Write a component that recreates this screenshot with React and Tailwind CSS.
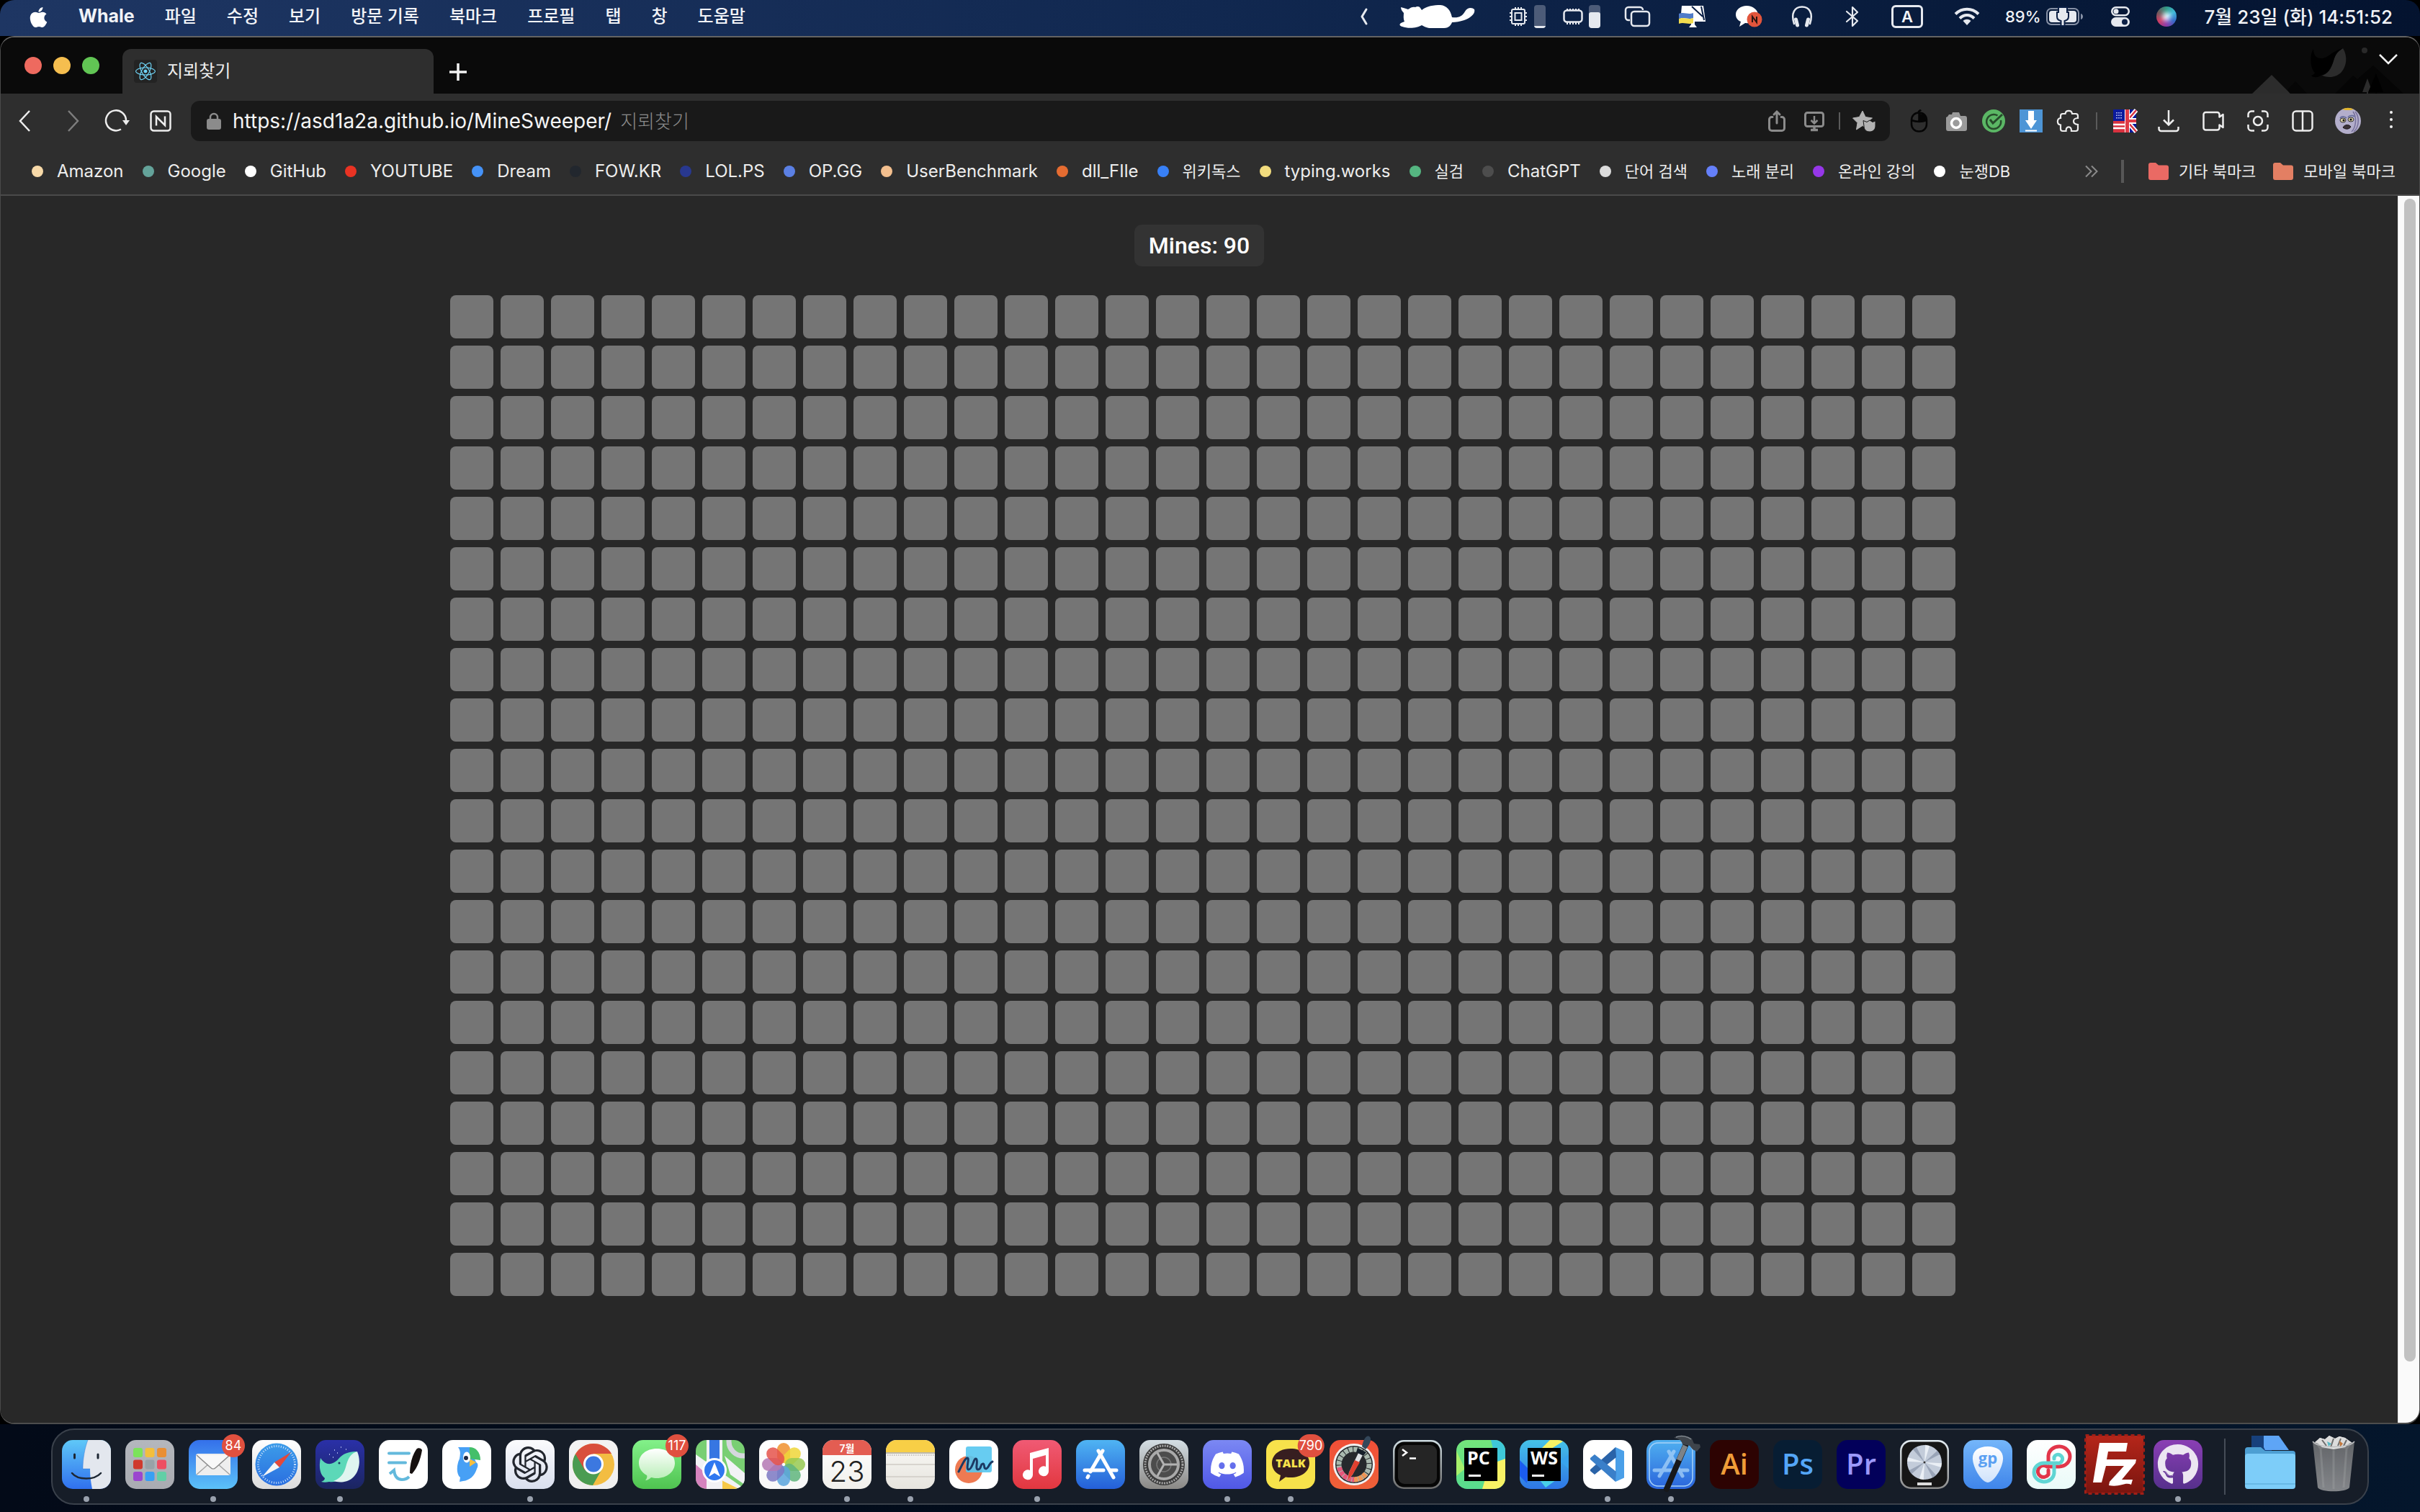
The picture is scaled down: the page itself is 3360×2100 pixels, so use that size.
import React from "react";
import { FaApple, FaReact, FaDiscord, FaGithub } from "react-icons/fa";
import { SiOpenai } from "react-icons/si";

const range = (n) => Array.from({ length: n }, (_, i) => i);

function Svg({ w, h, className = "", children, ...rest }) {
  return (
    <svg
      width={w}
      height={h}
      viewBox={`0 0 ${w} ${h}`}
      fill="none"
      aria-hidden="true"
      className={`shrink-0 overflow-visible ${className}`}
      {...rest}
    >
      {children}
    </svg>
  );
}

/* ---------- macOS menu bar ---------- */

const menus = ["파일", "수정", "보기", "방문 기록", "북마크", "프로필", "탭", "창", "도움말"];

function StatusItems() {
  const c = "#e6e9ef";
  return (
    <div className="flex items-center">
      <Svg w={12} h={24} stroke={c} strokeWidth="3" strokeLinecap="round" strokeLinejoin="round">
        <path d="M9 2 L3 12 L9 22" />
      </Svg>
      <Svg w={105} h={32} className="ml-[43px]" fill="#fff">
        <path d="M2 3 C6 4 9 5 12 6 C16 3 19 2 22 3 C25 1 28 2 29 4 L31 7 C38 1 48 0 57 0 C66 1 71 7 73 17 C82 18 87 16 91 9 C94 3 101 3 104 6 C106 12 98 18 90 21 C84 23 78 24 73 24 C72 27 69 32 62 32 H44 C38 32 35 30 31 28 C25 32 12 33 4 30 C-2 28 0 25 7 23 C5 18 6 14 6 11 C4 9 2 6 2 3 Z" />
      </Svg>
      <Svg w={26} h={28} className="ml-[47px]" stroke={c} strokeWidth="2">
        <rect x="4" y="4" width="18" height="20" rx="2" />
        <rect x="8.500" y="9" width="9" height="10" />
        <path d="M9 1v3M13 1v3M17 1v3M9 24v3M13 24v3M17 24v3M1 9h3M1 14h3M1 19h3M22 9h3M22 14h3M22 19h3" />
      </Svg>
      <span className="ml-[9px] flex h-8 w-4 flex-col justify-end overflow-hidden rounded-[4px] bg-[#4c5b78]">
        <span className="h-[3px] bg-[#e6e9ef]" />
      </span>
      <Svg w={28} h={24} className="ml-6" stroke={c} strokeWidth="2">
        <rect x="1.500" y="3.500" width="25" height="16" rx="4" strokeWidth="2.500" />
        <path d="M6 1v2M10 1v2M14 1v2M18 1v2M22 1v2M6 20v3M10 20v3M14 20v3M18 20v3M22 20v3" />
      </Svg>
      <span className="ml-2 flex h-8 w-4 flex-col justify-end overflow-hidden rounded-[4px] bg-[#4c5b78]">
        <span className="h-[22px] rounded-[3px] bg-[#e6e9ef]" />
      </span>
      <Svg w={36} h={28} className="ml-[34px]" stroke={c} strokeWidth="2.500">
        <path d="M7 19 H5 a4 4 0 0 1 -4 -4 V5 a4 4 0 0 1 4 -4 H21 a4 4 0 0 1 4 4" />
        <rect x="9" y="7" width="25" height="20" rx="4" />
      </Svg>
      <Svg w={38} h={30} className="ml-[39px]">
        <path d="M4 0 H34 L37 22 H22 V26 L25 30 H14 L17 26 V22 H2 Z" fill="#fff" />
        <path d="M18 1 L33 15 M31 1 L35 20" stroke="#0a1f46" strokeWidth="2" />
        <path d="M0 11 C8 8 12 13 20 10 V17 C12 20 8 15 0 18 Z" fill="#4f7bc8" />
        <path d="M0 18 C8 15 12 20 20 17 V24 C12 27 8 22 0 25 Z" fill="#f2dc4e" />
      </Svg>
      <Svg w={38} h={32} className="ml-10">
        <path d="M16 1 C25 1 32 7 32 14 C32 21 24 26 14 25 L6 30 L8 23 C3 21 1 17 1 13 C1 6 8 1 16 1Z" fill="#fff" />
        <circle cx="27" cy="20" r="10.500" fill="#e2553c" />
        <path d="M24 24 V16 L30 24 V16" stroke="#2a1512" strokeWidth="2" />
      </Svg>
      <Svg w={28} h={30} className="ml-[41px]" stroke={c} strokeWidth="2.500" strokeLinecap="round">
        <path d="M3 25 C-2 10 4 1.500 14 1.500 C24 1.500 30 10 25 25" />
        <path d="M5.500 19 L7.500 27 M22.500 19 L20.500 27" strokeWidth="5" />
      </Svg>
      <Svg w={18} h={30} className="ml-[47px]" stroke={c} strokeWidth="2.200" strokeLinejoin="round" strokeLinecap="round">
        <path d="M1 8 L16 21 L9 28 V2 L16 9 L1 22" />
      </Svg>
      <span className="ml-[45px] flex h-8 w-11 items-center justify-center rounded-[6px] border-[3px] border-[#e6e9ef] text-[22px] font-semibold leading-none">
        A
      </span>
      <Svg w={36} h={26} className="ml-[43px]" stroke={c} strokeWidth="4">
        <path d="M2 9.500 C11 0.500 25 0.500 34 9.500" />
        <path d="M8 15.500 C14 9.500 22 9.500 28 15.500" />
        <path d="M12.500 19 C16 16 20 16 23.500 19 L18 25 Z" fill={c} stroke="none" />
      </Svg>
      <span className="ml-[35px] w-12 whitespace-nowrap text-[22px] font-medium">89%</span>
      <Svg w={52} h={26} className="ml-[9px]">
        <rect x="1" y="2" width="44" height="22" rx="6" stroke="#8791a6" strokeWidth="2" />
        <path d="M48 9 c4 1 4 7 0 8z" fill="#8791a6" />
        <rect x="4" y="5" width="38" height="16" rx="4" fill={c} />
        <path d="M17 0 V7 H15 V13 C15 17 18 18.500 20.500 19 V26 H25.500 V19 C28 18.500 31 17 31 13 V7 H29 V0 Z" fill={c} stroke="#0b1f45" strokeWidth="2" />
      </Svg>
      <Svg w={26} h={28} className="ml-[38px]">
        <rect x="1.250" y="1.250" width="23.500" height="11" rx="5.500" stroke={c} strokeWidth="2.500" />
        <circle cx="7" cy="6.800" r="3.500" fill={c} />
        <rect x="0" y="15" width="26" height="13" rx="6.500" fill={c} />
        <circle cx="19" cy="21.500" r="4" fill="#0b1f45" />
      </Svg>
      <span className="ml-[37px] flex size-7 items-center justify-center rounded-full bg-[conic-gradient(#2e9b86,#3fb8d9,#3469c9,#8c3aa8,#cf3c62,#6a5a5a,#2e9b86)]">
        <span className="size-3 rounded-full bg-[#e8f4ff] blur-[3px]" />
      </span>
      <time className="ml-[33px] w-[267px] whitespace-nowrap text-right text-[26px] font-medium">7월 23일 (화) 14:51:52</time>
    </div>
  );
}

function MenuBar() {
  return (
    <header className="flex h-[50px] shrink-0 items-center justify-between rounded-t-[20px] bg-linear-to-r from-[#1e3663] via-[#112850] to-[#04132f] pb-1 pl-10 pr-[38px] font-['Inter','Noto_Sans_CJK_KR',sans-serif] text-[#f1f3f7]">
      <nav className="flex items-center gap-[42px] text-[24px] font-medium">
        <button aria-label="Apple" className="pt-[2px]">
          <FaApple className="h-8 w-[27px] text-white" />
        </button>
        <button className="text-[25px] font-bold">Whale</button>
        {menus.map((m) => (
          <button key={m} className="whitespace-nowrap">{m}</button>
        ))}
      </nav>
      <StatusItems />
    </header>
  );
}

/* ---------- Browser chrome ---------- */

function TabStrip() {
  return (
    <div className="flex h-[78px] shrink-0 items-center bg-[#0a0a0a] pl-[33px]">
      <div className="flex gap-4">
        <button aria-label="닫기" className="size-6 rounded-full bg-[#ee6a5f]" />
        <button aria-label="최소화" className="size-6 rounded-full bg-[#f5be4f]" />
        <button aria-label="전체 화면" className="size-6 rounded-full bg-[#61c554]" />
      </div>
      <button className="ml-8 flex h-[62px] w-[432px] items-center self-end rounded-t-[12px] bg-[#2e2e2e] pl-4 text-[24px] text-[#ededed]">
        <span className="flex size-8 items-center justify-center rounded-[4px] bg-[#232323]">
          <FaReact className="size-7 text-[#6fd3f5]" />
        </span>
        <span className="ml-[14px]">지뢰찾기</span>
      </button>
      <button aria-label="새 탭" className="ml-[22px] pt-[18px]">
        <Svg w={24} h={24} stroke="#f2f2f2" strokeWidth="3.500">
          <path d="M12 0V24M0 12H24" />
        </Svg>
      </button>
      <div className="relative ml-auto h-[78px] w-[259px]">
        <Svg w={259} h={78}>
          <path d="M27 78 L54 52 L80 78 Z" fill="#2c2c2c" />
          <path d="M76 73 L87 61 L103 78 H80 Z" fill="#060606" />
          <path d="M142 78 L167 53 L173 58 L195 39 L237 78 Z" fill="#050505" />
          <path d="M187 57 L191 68 V76 H180 Z" fill="#2c2c2c" />
          <path d="M199 50 L209 76 H188 Z M198 76h2v2h-2z" fill="#000" />
          <path d="M187 76v2" stroke="#2c2c2c" strokeWidth="2" />
          <circle cx="183" cy="18" r="4" fill="#2a2a2a" />
          <path d="M153 15 C160 26 158 40 151 48 C144 56 132 57 122 52 C134 47 138 40 141 29 C144 20 148 18 153 15Z" fill="#2c2c2c" />
          <path d="M112 16 C112 25 116 29 123 29 C133 29 137 19 153 15 C147 19 143 22 140 32 C137 43 132 52 122 53 C118 56 112 56 109 53 C112 52 114 50 114 49 C108 44 106 25 112 16Z" fill="#000" />
        </Svg>
        <button aria-label="탭 목록" className="absolute right-[30px] top-[22px]">
          <Svg w={26} h={16} stroke="#f2f2f2" strokeWidth="2.500">
            <path d="M1 2 L13 14 L25 2" />
          </Svg>
        </button>
      </div>
    </div>
  );
}

function Toolbar() {
  const ic = "#ededed";
  return (
    <div className="flex h-[76px] shrink-0 items-center bg-[#2e2e2e] pl-[25px] pr-9">
      <button aria-label="뒤로">
        <Svg w={16} h={30} stroke={ic} strokeWidth="2.500"><path d="M15 1 L2 15 L15 29" /></Svg>
      </button>
      <button aria-label="앞으로" className="ml-[52px]">
        <Svg w={16} h={30} stroke="#7d7d7d" strokeWidth="2.500"><path d="M1 1 L14 15 L1 29" /></Svg>
      </button>
      <button aria-label="새로고침" className="ml-9">
        <Svg w={34} h={30} stroke={ic} strokeWidth="2.500">
          <path d="M22 26.500 A14 14 0 1 1 29 14" />
          <path d="M24 14 H34 L29 21 Z" fill={ic} stroke="none" />
        </Svg>
      </button>
      <button aria-label="네이버" className="ml-7">
        <Svg w={30} h={30} stroke={ic} strokeWidth="2.500">
          <rect x="1.500" y="1.500" width="27" height="27" rx="4" />
          <path d="M9 21.500 V9 L21 21 V8.500" />
        </Svg>
      </button>
      <div className="ml-[27px] flex h-14 flex-1 items-center rounded-[12px] bg-[#191919] pl-[22px] pr-5">
        <Svg w={20} h={24}>
          <rect x="0" y="9" width="20" height="15" rx="3" fill="#8b8b8b" />
          <path d="M5 10 V7 a5 5 0 0 1 10 0 V10" stroke="#8b8b8b" strokeWidth="2.500" />
        </Svg>
        <input
          aria-label="주소창"
          readOnly
          value="https://asd1a2a.github.io/MineSweeper/"
          className="ml-4 field-sizing-content bg-transparent text-[28px] text-[#f5f5f5] outline-none"
        />
        <span className="ml-3 text-[26px] font-light text-[#8b8b8b]">지뢰찾기</span>
        <div className="ml-auto flex items-center">
          <button aria-label="공유">
            <Svg w={24} h={30} stroke="#8b8b8b" strokeWidth="3" strokeLinecap="round">
              <path d="M6 9.500 H5 a3.500 3.500 0 0 0 -3.500 3.500 V25 a3.500 3.500 0 0 0 3.500 3.500 H19 a3.500 3.500 0 0 0 3.500 -3.500 V13 a3.500 3.500 0 0 0 -3.500 -3.500 H18" />
              <path d="M12 18 V3 M8 6 L12 2 L16 6" />
            </Svg>
          </button>
          <button aria-label="앱 설치" className="ml-[26px]">
            <Svg w={28} h={28} stroke="#8b8b8b" strokeWidth="2.500">
              <rect x="1.500" y="2.500" width="25" height="19" rx="3" strokeWidth="3" />
              <path d="M14 7 V17 M9.500 13 L14 17.500 L18.500 13" />
              <path d="M9 26.500 H19 M14 22 V26" strokeWidth="3.500" />
            </Svg>
          </button>
          <span className="ml-5 h-6 w-[2px] bg-[#5a5a5a]" />
          <button aria-label="즐겨찾기" className="ml-[17px]">
            <Svg w={32} h={30} fill="#b2b2b2">
              <path d="M14 1 L18 9.500 L27.500 11 L21 16 H17 V23 L14 21.500 L5.500 27 L7 17.500 L0.500 11 L9.500 9.500 Z" stroke="#b2b2b2" strokeLinejoin="round" />
              <path d="M15 14.500 L20 16.500 L24 14 L28 16.500 L32 15 V22 C32 27 28 30 24 30 C19 30 16 27 16 22 Z" stroke="#191919" />
            </Svg>
          </button>
        </div>
      </div>
      <div className="ml-6 flex items-center gap-5">
        <button aria-label="마우스 제스처">
          <Svg w={32} h={32} stroke="#050505" strokeWidth="2.500">
            <rect x="6" y="4.500" width="21" height="26" rx="10" />
            <path d="M6 15 C12 17.500 21 17.500 27 15 M16.500 4 V17 M16 5 C15 2 18 2 19 0.500" />
            <path d="M17 6 C23 6 26 9 26 15 C23 16.500 20 17 17 17Z" fill="#050505" stroke="none" />
          </Svg>
        </button>
        <button aria-label="캡처">
          <Svg w={32} h={30}>
            <path d="M4 9 L6 6 H10 L11 3 H20 L22 8 H28 a3 3 0 0 1 3 3 V26 a3 3 0 0 1 -3 3 H5 a3 3 0 0 1 -3 -3 V10Z" fill="#9a9a9a" />
            <circle cx="16" cy="18" r="6.500" stroke="#fff" strokeWidth="3.500" />
          </Svg>
        </button>
        <button aria-label="검사">
          <Svg w={32} h={32}>
            <circle cx="16" cy="16" r="16" fill="#5bb765" />
            <path d="M28 7 L15 19 L11 14" stroke="#274b2b" strokeWidth="3" />
            <path d="M21.500 8.500 A10 10 0 1 0 26 15" stroke="#274b2b" strokeWidth="2.500" />
          </Svg>
        </button>
        <button aria-label="다운로더">
          <Svg w={32} h={32}>
            <rect width="32" height="32" fill="#4d95d6" />
            <path d="M12 2 H20 V15 H24 L16 27 L8 15 H12 Z M8 28.500h16v2H8z" fill="#fff" />
          </Svg>
        </button>
        <button aria-label="확장 앱">
          <Svg w={32} h={30} stroke={ic} strokeWidth="2.200">
            <path d="M8 5 h3.500 C12 -0.500 20.500 -0.500 21 5 H26 a3 3 0 0 1 3 3 V11 C21 11 21 19.500 29 20 V26 a3 3 0 0 1 -3 3 H20 C20 21.500 12.500 21.500 12.500 29 H8 a3 3 0 0 1 -3 -3 V20.500 C-0.500 20 -0.500 11.500 5 11 V8 a3 3 0 0 1 3 -3z" />
          </Svg>
        </button>
      </div>
      <span className="ml-[22px] h-6 w-[2px] bg-[#5a5a5a]" />
      <button aria-label="번역" className="ml-[22px]">
        <Svg w={32} h={32} className="overflow-hidden rounded-[5px]">
          <rect width="32" height="32" fill="#0b1a9c" />
          <rect y="16" width="16" height="16" fill="#d8323f" />
          <path d="M0 21h16M0 26h16" stroke="#fff" strokeWidth="2.500" />
          <path d="M5 4v10M8 4v10M11 4v10" stroke="#dfe3ff" strokeWidth="1.500" strokeDasharray="1.500 2" />
          <path d="M19 16 L32 1 M19 16 L32 31" stroke="#fff" strokeWidth="6" />
          <path d="M19 16 L32 1 M19 16 L32 31" stroke="#d8323f" strokeWidth="2.500" />
          <path d="M16 0h7v12h9v8h-9v12h-7z" fill="#fff" />
          <path d="M17 0h5v14h10v4h-10v14h-5z" fill="#e03a46" />
        </Svg>
      </button>
      <div className="ml-[30px] flex items-center gap-8">
        <button aria-label="다운로드">
          <Svg w={30} h={30} stroke={ic} strokeWidth="2.500">
            <path d="M15 0V20M8 13.500L15 20.500L22 13.500M1.500 23V26a3 3 0 0 0 3 3H25.500a3 3 0 0 0 3-3V23" />
          </Svg>
        </button>
        <button aria-label="녹화">
          <Svg w={30} h={30} stroke={ic} strokeWidth="2.500" strokeLinejoin="round">
            <path d="M4.500 3H20.500a3 3 0 0 1 3 3V9.500L28.500 6V24L23.500 20.500V24.500a3 3 0 0 1-3 3H4.500a3 3 0 0 1-3-3V6a3 3 0 0 1 3-3z" />
          </Svg>
        </button>
        <button aria-label="화면 캡처">
          <Svg w={30} h={30} stroke={ic} strokeWidth="2.500">
            <path d="M10 1.500H6A4.500 4.500 0 0 0 1.500 6V10M20 1.500H24A4.500 4.500 0 0 1 28.500 6V10M10 28.500H6A4.500 4.500 0 0 1 1.500 24V20M20 28.500H24A4.500 4.500 0 0 0 28.500 24V20" />
            <circle cx="15" cy="15" r="6" />
          </Svg>
        </button>
        <button aria-label="사이드바">
          <Svg w={30} h={30} stroke={ic} strokeWidth="2.500">
            <rect x="1.500" y="1.500" width="27" height="27" rx="4.500" />
            <path d="M15 1V29" />
          </Svg>
        </button>
      </div>
      <button aria-label="프로필" className="ml-[30px]">
        <Svg w={36} h={36}>
          <circle cx="18" cy="18" r="18" fill="#b3aecb" />
          <path d="M28 5 C34 12 34 26 26 33" stroke="#77709c" strokeWidth="1.500" />
          <path d="M25 5 C30 12 30 26 23 33" stroke="#77709c" strokeWidth="1.500" />
          <path d="M10 2 C15 -1 21 -1 26 2 L21 3 H15 Z" fill="#e2b52c" />
          <path d="M7 14 C10 11 14 12 16 14 M18 13 C20 10 25 10 27 12" stroke="#6a70a0" strokeWidth="2" />
          <ellipse cx="11" cy="17" rx="4" ry="3" fill="#d8cda4" stroke="#333" />
          <ellipse cx="22" cy="16" rx="4" ry="3" fill="#d8cda4" stroke="#333" />
          <circle cx="12" cy="17" r="1.500" fill="#111" />
          <circle cx="22" cy="16" r="1.500" fill="#111" />
          <path d="M11 27 C13 23 19 22 22 26 C20 30 14 30 11 27Z" fill="#3b3238" stroke="#1d181c" />
        </Svg>
      </button>
      <button aria-label="메뉴" className="ml-[39px] pb-1">
        <Svg w={6} h={24} fill="#f2f2f2">
          <circle cx="3" cy="2" r="2" />
          <circle cx="3" cy="12" r="2" />
          <circle cx="3" cy="22" r="2" />
        </Svg>
      </button>
    </div>
  );
}

const bookmarks = [
  ["Amazon", "bg-[#f7d9a8]"],
  ["Google", "bg-[#64a39a]"],
  ["GitHub", "bg-white"],
  ["YOUTUBE", "bg-[#e93323]"],
  ["Dream", "bg-[#4592f7]"],
  ["FOW.KR", "bg-[#22272e]"],
  ["LOL.PS", "bg-[#28388f]"],
  ["OP.GG", "bg-[#5b80e4]"],
  ["UserBenchmark", "bg-[#f3bf8e]"],
  ["dll_FIle", "bg-[#e56c31]"],
  ["위키독스", "bg-[#3880f6]"],
  ["typing.works", "bg-[#f2dc7e]"],
  ["실검", "bg-[#55b681]"],
  ["ChatGPT", "bg-[#4d4d4d]"],
  ["단어 검색", "bg-[#dcdcdc]"],
  ["노래 분리", "bg-[#6580fa]"],
  ["온라인 강의", "bg-[#9637e8]"],
  ["눈쟁DB", "bg-white"],
];

function Folder({ label, color }) {
  return (
    <button className="flex items-center gap-[14px] text-[22px]">
      <Svg w={28} h={24} fill={color}>
        <path d="M0 3 a3 3 0 0 1 3 -3 H10 L14 3.500 H25 a3 3 0 0 1 3 3 V21 a3 3 0 0 1 -3 3 H3 a3 3 0 0 1 -3 -3 Z" />
      </Svg>
      <span className="whitespace-nowrap">{label}</span>
    </button>
  );
}

function BookmarkBar() {
  return (
    <div className="flex h-[66px] shrink-0 items-center border-b-2 border-[#4a4a4a] bg-[#2e2e2e] pl-[43px] pr-[33px] text-[24px] text-[#ededed]">
      <nav className="flex items-center gap-[26px]">
        {bookmarks.map(([label, dot]) => (
          <a key={label} href="#" className="flex items-center gap-[19px]">
            <span className={`size-4 shrink-0 rounded-full ${dot}`} />
            <span className={`whitespace-nowrap ${/[가-힣]/.test(label) ? "text-[22px]" : ""}`}>{label}</span>
          </a>
        ))}
      </nav>
      <div className="ml-auto flex items-center">
        <button aria-label="더 보기">
          <Svg w={18} h={16} stroke="#8b8b8b" strokeWidth="2">
            <path d="M1 0.500L8.500 8L1 15.500M9 0.500L16.500 8L9 15.500" />
          </Svg>
        </button>
        <span className="ml-8 h-8 w-1 bg-[#575757]" />
        <div className="ml-[34px] flex items-center gap-6">
          <Folder label="기타 북마크" color="#ea6a64" />
          <Folder label="모바일 북마크" color="#e37f63" />
        </div>
      </div>
    </div>
  );
}

/* ---------- Game page ---------- */

function Game() {
  return (
    <div className="flex min-h-0 flex-1 bg-[#282828] font-['Roboto','Noto_Sans_CJK_KR',sans-serif]">
      <main className="flex flex-1 flex-col items-center gap-10 pt-10">
        <h1 className="flex h-[58px] items-center rounded-[10px] bg-[#333333] px-5 text-[32px] font-medium text-white">Mines: 90</h1>
        <div className="grid grid-cols-[repeat(30,60px)] gap-[10px] pl-[10px]">
          {range(600).map((i) => (
            <button
              key={i}
              aria-label={`${Math.floor(i / 30) + 1}행 ${(i % 30) + 1}열`}
              className="size-[60px] rounded-[8px] bg-[#757575]"
            />
          ))}
        </div>
      </main>
      <div className="w-[30px] border-l border-[#e4e4e4] bg-[#fafafa] pl-2 pt-1">
        <div className="h-[95%] w-4 rounded-full bg-[#c1c1c1]" />
      </div>
    </div>
  );
}

/* ---------- Dock ---------- */

const G = ({ id, a, b, x2 = 0, y2 = 1 }) => (
  <linearGradient id={id} x1="0" y1="0" x2={x2} y2={y2}>
    <stop offset="0" stopColor={a} />
    <stop offset="1" stopColor={b} />
  </linearGradient>
);

const Tile = ({ id, a, b }) => (
  <>
    <defs><G id={id} a={a} b={b || a} /></defs>
    <rect width="68" height="68" rx="15" fill={`url(#${id})`} />
  </>
);

const sans = { fontFamily: "Open Sans, Noto Sans CJK KR, sans-serif" };
const inter = { fontFamily: "Inter, Noto Sans CJK KR, sans-serif" };

const apps = [
  { name: "Finder", run: true, art: (
    <>
      <Tile id="fi" a="#5fc8f8" b="#3070ee" />
      <path d="M36 0 H53 a15 15 0 0 1 15 15 V53 a15 15 0 0 1 -15 15 H42 C40 58 39 50 39 40 H29 C29 26 32 10 36 0Z" fill="#e3e7ee" />
      <path d="M17.500 20v5M50 20v5" stroke="#1d2733" strokeWidth="3" strokeLinecap="round" />
      <path d="M14 46 C22 56 45 56 54 46" stroke="#1d2733" strokeWidth="2.500" strokeLinecap="round" />
      <path d="M39 40 H29 C29 26 32 10 36 0" stroke="#2a6fd0" strokeOpacity=".4" />
    </>) },
  { name: "Launchpad", art: (
    <>
      <Tile id="lp" a="#b4b7bd" b="#a9abb1" />
      {["#7be35a", "#f3bf3c", "#e98f34", "#cf3a2e", "#98a2a8", "#ee4e62", "#9b46cf", "#38a0f4", "#62cfa6"].map((f, i) => (
        <rect key={i} x={11 + (i % 3) * 16.500} y={11 + Math.floor(i / 3) * 16.500} width="13" height="13" rx="3" fill={f} />
      ))}
    </>) },
  { name: "Mail", run: true, badge: "84", art: (
    <>
      <Tile id="ml" a="#3470ea" b="#5cc2f9" />
      <rect x="10" y="19" width="48" height="30" rx="3" fill="#eeeeee" />
      <path d="M11 48 L28 33 M57 48 L40 33" stroke="#a5a5a5" strokeWidth="1.500" />
      <path d="M11 21 L30 38 C33 41 35 41 38 38 L57 21" stroke="#8d8d8d" strokeWidth="1.500" fill="#f8f8f8" />
    </>) },
  { name: "Safari", art: (
    <>
      <Tile id="sf" a="#ffffff" b="#dcdcdc" />
      <defs><G id="sf2" a="#3c9ce9" b="#2a6fe0" /></defs>
      <circle cx="34" cy="34" r="29.500" fill="url(#sf2)" />
      <circle cx="34" cy="34" r="25.500" stroke="#cfe4fb" strokeWidth="3" strokeDasharray="1 2.300" />
      <path d="M54 17 L38 38 L31 31 Z" fill="#e4483a" />
      <path d="M14 51 L31 31 L38 38 Z" fill="#f5f5f5" />
    </>) },
  { name: "Whale", run: true, art: (
    <>
      <Tile id="wh" a="#2a30a8" b="#1b2560" />
      <path d="M7 25 C15 37 25 35 34 24 C41 17 50 16 58 16 C50 19 46 28 43 38 C39 52 30 60 19 58 C15 59 11 59 8 58 C11 57 13 55 13 53 C5 47 5 35 7 25Z" fill="#5cd8b8" />
      <path d="M58 16 C64 30 60 46 51 53 C43 60 31 59 25 57 C38 52 41 42 43 34 C46 24 50 18 58 16Z" fill="#dff5f0" />
      <circle cx="33" cy="32" r="1.500" fill="#163a60" />
      <path d="M35 10h1M26 14h1M19 20h1M42 13h1M30 18h1M24 24h1" stroke="#cdd6ff" strokeWidth="1.500" />
    </>) },
  { name: "Notes Writer", art: (
    <>
      <Tile id="gn" a="#ffffff" />
      <path d="M14 18.500H42M14 31.500H37" stroke="#63b9dc" strokeWidth="4" strokeLinecap="round" />
      <path d="M15 47 L21 42 C22 51 26 55 32 55 C37 55 40 53 42 51" stroke="#63b9dc" strokeWidth="4" />
      <path d="M52 13 C54 10 59 11 60 14 C58 26 54 38 46 47 L43 46 C43 34 46 22 52 13Z" fill="#16100f" />
    </>) },
  { name: "Papago", art: (
    <>
      <Tile id="pp" a="#ffffff" />
      <path d="M22 10 H38 L47 31 C50 32 50 36 48 40 C45 50 38 56 29 57 L24 58 L25 52 C19 47 20 34 24 26 C25 20 26 15 22 10Z" fill="#47a0f5" />
      <path d="M38 10 C47 10 53 17 53 28 L38 26 Z" fill="#44bf6a" />
      <path d="M38 26 L47 31 L38 37 Z" fill="#f7bf3e" />
      <ellipse cx="34" cy="24" rx="5" ry="7.500" fill="#fff" />
      <circle cx="33" cy="25" r="3" fill="#1e2a44" />
    </>) },
  { name: "ChatGPT", run: true, art: (
    <>
      <Tile id="cg" a="#fbfbfd" b="#d9dfee" />
      <SiOpenai x="9" y="9" size={50} color="#22262e" />
    </>) },
  { name: "Chrome", art: (
    <>
      <Tile id="cr" a="#f3f3f3" b="#efefef" />
      <circle cx="34" cy="34" r="29" fill="#f3bd42" />
      <path d="M34 34 L8.900 19.500 A29 29 0 0 0 33 63 L46 40 Z" fill="#4a9c52" />
      <path d="M34 19 H59 A29 29 0 0 0 9 19.500 L22 42 Z" fill="#d94f3d" />
      <circle cx="34" cy="33.500" r="14" fill="#fff" />
      <circle cx="34" cy="33.500" r="11" fill="#3c78e0" />
    </>) },
  { name: "Messages", badge: "117", art: (
    <>
      <Tile id="ms" a="#83f18a" b="#4fc350" />
      <defs><G id="ms2" a="#ffffff" b="#b6edb4" /></defs>
      <path d="M34 12 C49 12 59 21 59 32 C59 44 48 53 34 53 C31 53 28 52.500 26 52 C24 54 21 56 18 56 C20 54 21 51 20 49 C13 45 9 39 9 32 C9 21 19 12 34 12Z" fill="url(#ms2)" />
    </>) },
  { name: "Maps", art: (
    <>
      <defs><clipPath id="mp"><rect width="68" height="68" rx="15" /></clipPath></defs>
      <g clipPath="url(#mp)">
        <rect width="68" height="68" fill="#79cf73" />
        <path d="M0 22 L15 34 V68 H0Z" fill="#d583be" />
        <path d="M0 20 L68 68 H38 L0 34Z" fill="#f2f2f5" />
        <path d="M36 56 L60 68 H36Z" fill="#f7c948" />
        <path d="M48 48 L68 62 V46 L40 22Z" fill="#f2f2f5" />
        <circle cx="66" cy="2" r="20" stroke="#d5d7dd" strokeWidth="7" />
        <rect x="15" width="22" height="68" fill="#f2f2f5" />
        <rect x="19" width="14" height="30" fill="#3776e2" />
        <circle cx="26" cy="42" r="17" fill="#fff" />
        <circle cx="26" cy="42" r="14" fill="#2f78f0" />
        <path d="M26 31 L34 51 L26 46 L18 51Z" fill="#fff" />
      </g>
    </>) },
  { name: "Photos", art: (
    <>
      <Tile id="ph" a="#ffffff" b="#f7f7f7" />
      {["#f0912e", "#efd638", "#97c951", "#5fb57c", "#5aa5dd", "#7b78c3", "#b478b4", "#e5534b"].map((f, i) => (
        <rect key={i} x="25" y="4" width="18" height="28" rx="9" fill={f} fillOpacity=".85" transform={`rotate(${i * 45} 34 34)`} />
      ))}
    </>) },
  { name: "Calendar", run: true, art: (
    <>
      <Tile id="ca" a="#ffffff" b="#f1f0ec" />
      <path d="M0 21 V15 a15 15 0 0 1 15 -15 H53 a15 15 0 0 1 15 15 V21 Z" fill="#e35d52" />
      <text x="34" y="17" textAnchor="middle" fontSize="14" fontWeight="600" fill="#fff" style={inter}>7월</text>
      <text x="34" y="58" textAnchor="middle" fontSize="40" fontWeight="300" fill="#222" style={inter}>23</text>
    </>) },
  { name: "Notes", run: true, art: (
    <>
      <Tile id="no" a="#fbfaf7" b="#e6e4de" />
      <path d="M0 17 V15 a15 15 0 0 1 15 -15 H53 a15 15 0 0 1 15 15 V17 Z" fill="#f8cf46" />
      <path d="M0 18H68" stroke="#a9a391" strokeWidth="1.500" />
      <path d="M2 21H68" stroke="#b9b6ae" strokeWidth="1.500" strokeDasharray="1.500 1.500" />
      <path d="M0 34H68M0 51H68" stroke="#cfccc5" strokeWidth="1.500" />
    </>) },
  { name: "Freeform", art: (
    <>
      <Tile id="ff" a="#ffffff" />
      <circle cx="27" cy="41" r="19" fill="#ee7a52" />
      <rect x="23" y="9" width="36" height="36" rx="3" fill="#56c6ef" fillOpacity=".9" />
      <path d="M13 44 C18 34 22 25 25 25 C29 25 22 41 27 41 C32 41 34 25 37 26 C41 27 35 41 40 41 C45 41 43 32 47 33 C50 34 47 40 51 40 C55 39 55 32 60 30" stroke="#1c3a63" strokeWidth="3" strokeLinecap="round" />
    </>) },
  { name: "Music", run: true, art: (
    <>
      <Tile id="mu" a="#f05a74" b="#e2373f" />
      <path d="M24 18 L50 11 V43 a7 7 0 1 1 -4 -6 V21 L28 26 V48 a7 7 0 1 1 -4 -6Z" fill="#fff" />
    </>) },
  { name: "App Store", art: (
    <>
      <Tile id="as" a="#4fb4f3" b="#245fd8" />
      <path d="M37 15 L20 44 M31 15 L52 52 M17 50 L16 52" stroke="#fff" strokeWidth="5" strokeLinecap="round" />
      <path d="M12 42 H38 M48 42 H56" stroke="#fff" strokeWidth="5" strokeLinecap="round" />
    </>) },
  { name: "Settings", art: (
    <>
      <Tile id="se" a="#d4dee4" b="#8a8885" />
      <circle cx="34" cy="34" r="29" fill="#3b3b3b" />
      <circle cx="34" cy="34" r="26" stroke="#a5a5a5" strokeWidth="3" strokeDasharray="2 1.500" />
      <circle cx="34" cy="34" r="20" stroke="#a9a9a9" strokeWidth="4" fill="#4c4c4c" />
      <circle cx="34" cy="34" r="10" stroke="#777" strokeWidth="1.500" />
      <path d="M34 34 H52 M34 34 L25 18 M34 34 L25 50" stroke="#b3b3b3" strokeWidth="3" />
    </>) },
  { name: "Discord", run: true, art: (
    <>
      <Tile id="di" a="#7b88f3" b="#5058e6" />
      <FaDiscord x="9" y="9" size={50} color="#fff" />
    </>) },
  { name: "KakaoTalk", run: true, badge: "790", art: (
    <>
      <Tile id="ka" a="#f7e24b" />
      <path d="M34 12 C49 12 60 20 60 32 C60 44 49 52 34 52 C32 52 29 52 27 51.500 L18 58 L20 49 C13 46 8 40 8 32 C8 20 19 12 34 12Z" fill="#371e20" />
      <text x="34" y="38" textAnchor="middle" fontSize="16" fontWeight="800" fill="#f7e24b" style={sans}>TALK</text>
    </>) },
  { name: "Color Picker", art: (
    <>
      <Tile id="cp" a="#f04f38" b="#ee6038" />
      <circle cx="34" cy="34" r="29" fill="#f1f1f1" />
      <circle cx="34" cy="34" r="26" fill="#26292c" />
      <circle cx="34" cy="34" r="21" stroke="#a9b9ae" strokeWidth="7" strokeDasharray="5.500 1" />
      <path d="M13.500 38 A21 21 0 0 0 34 55" stroke="#e6567a" strokeWidth="7" strokeDasharray="5.500 1" />
      <path d="M34 55 A21 21 0 0 0 50 47" stroke="#ee9555" strokeWidth="7" strokeDasharray="5.500 1" />
      <path d="M41 16 L47 19 L32 48 L25 56 L27 45 Z" fill="#dfe3e6" />
      <path d="M35 28 L42 31 L32 48 L25 56 L27 45Z" fill="#e0402f" />
      <path d="M39 11 L51 17 L47 22 L37 17Z" fill="#16202a" />
      <path d="M45 9 C47 -1 51 -7 55 -5 C59 -3 57 6 50 13Z" fill="#33475a" />
    </>) },
  { name: "Terminal", art: (
    <>
      <Tile id="te" a="#cfdde3" b="#6c6c6c" />
      <rect x="2.500" y="2.500" width="63" height="63" rx="13" fill="#060606" />
      <rect x="7" y="7" width="54" height="54" rx="9" fill="#252525" />
      <path d="M13 13 L19 17.500 L13 22" stroke="#fff" strokeWidth="2.500" />
      <path d="M23 25.500 H32" stroke="#fff" strokeWidth="2.500" />
    </>) },
  { name: "PyCharm", art: (
    <>
      <Tile id="pc" a="#74e57a" b="#58dc8e" />
      <path d="M48 0 H53 a15 15 0 0 1 15 15 V26 L56 32Z" fill="#3fc8d8" />
      <path d="M68 26 V53 a15 15 0 0 1 -15 15 H36 L46 34Z" fill="#f8f265" />
      <path d="M0 50 V15 L12 40Z" fill="#a6ef6b" />
      <rect x="11" y="11" width="46" height="46" fill="#000" />
      <text x="15" y="34" fontSize="25" fontWeight="700" fill="#fff" style={sans}>PC</text>
      <path d="M17 49.500H34" stroke="#fff" strokeWidth="3" />
    </>) },
  { name: "WebStorm", art: (
    <>
      <Tile id="ws" a="#45c2e8" b="#2e76e6" />
      <path d="M42 0 H53 a15 15 0 0 1 7 2 L44 12 H30Z" fill="#f8f265" />
      <path d="M0 28 L12 40 L10 60 L0 50Z" fill="#1b5cf0" />
      <path d="M28 56 H50 L36 66Z" fill="#48d0e8" />
      <path d="M68 40 V20 L56 30Z" fill="#38a4ee" />
      <rect x="11" y="11" width="46" height="46" fill="#000" />
      <text x="15" y="34" fontSize="25" fontWeight="700" fill="#fff" style={sans}>WS</text>
      <path d="M17 49.500H34" stroke="#fff" strokeWidth="3" />
    </>) },
  { name: "VS Code", run: true, art: (
    <>
      <Tile id="vs" a="#ffffff" />
      <path d="M45 10 L57 15.500 V52.500 L45 58 Z" fill="#4a9fe8" />
      <path d="M45 10 L46 24 L16 48 L10 43 V41 Z" fill="#2a63a8" />
      <path d="M45 58 L46 44 L16 20 L10 25 V27 Z" fill="#3a7fc9" />
    </>) },
  { name: "Xcode", run: true, art: (
    <>
      <Tile id="xc" a="#4fb0f0" b="#2a64dc" />
      <rect x="4" y="4" width="60" height="60" rx="12" stroke="#a8d2f8" strokeWidth="1.500" />
      <path d="M38 16 L18 50 M31 16 L50 50 M11 42 H57" stroke="#a8d2f8" strokeWidth="5" strokeLinecap="round" strokeOpacity=".75" />
      <path d="M54 8 L28 68" stroke="#17181b" strokeWidth="8" strokeLinecap="round" />
      <path d="M54 8 L45 28" stroke="#7d8388" strokeWidth="7" />
      <path d="M38 -3 C47 -8 56 -6 63 -2 L66 5 L74 6 L75 10 L70 16 L64 13 L60 8 L50 6 C49 0 44 -2 38 -3Z" fill="#3e444b" />
      <path d="M41 -4 C49 -7 57 -5 62 -1" stroke="#838a91" strokeWidth="1.500" />
    </>) },
  { name: "Illustrator", art: (
    <>
      <Tile id="ai" a="#2d0302" />
      <text x="34" y="48" textAnchor="middle" fontSize="40" fontWeight="600" fill="#f09c38" style={sans}>Ai</text>
    </>) },
  { name: "Photoshop", art: (
    <>
      <Tile id="ps" a="#071d33" />
      <text x="34" y="48" textAnchor="middle" fontSize="40" fontWeight="600" fill="#54a6f8" style={sans}>Ps</text>
    </>) },
  { name: "Premiere Pro", art: (
    <>
      <Tile id="pr" a="#02005a" />
      <text x="34" y="48" textAnchor="middle" fontSize="40" fontWeight="600" fill="#9b98fa" style={sans}>Pr</text>
    </>) },
  { name: "Logic Pro", art: (
    <>
      <Tile id="lo" a="#e4edf2" b="#8b8b8b" />
      <rect x="2.500" y="2.500" width="63" height="63" rx="13" fill="#161616" />
      <circle cx="34" cy="31" r="24" fill="#c3ccda" />
      {range(8).map((i) => (
        <path key={i} d="M34 31 L31 7 H37Z" fill={i % 2 ? "#8e9aae" : "#f4f7fb"} fillOpacity=".8" transform={`rotate(${i * 45 + 10} 34 31)`} />
      ))}
      <circle cx="34" cy="31" r="1.500" fill="#333" />
      <rect x="24" y="59" width="20" height="4" fill="#dcdcdc" />
    </>) },
  { name: "Guitar Pro", art: (
    <>
      <Tile id="gp" a="#74b6fa" b="#3f85ea" />
      <defs><G id="gp2" a="#ffffff" b="#cfe2fb" /></defs>
      <path d="M34 9 C48 9 56 16 55 27 C54 40 42 59 34 59 C26 59 14 40 13 27 C12 16 20 9 34 9Z" fill="url(#gp2)" />
      <text x="34" y="33" textAnchor="middle" fontSize="22" fontWeight="700" fill="#5aa0f2" style={sans}>gp</text>
    </>) },
  { name: "Chords", art: (
    <>
      <Tile id="ch" a="#ffffff" b="#e9faf8" />
      <g strokeWidth="5" strokeLinecap="round">
        <path d="M30 32 V22 A15 14 0 1 1 45 37 H28 A8 8 0 1 0 30 48 V42" stroke="#e2364a" />
        <path d="M38 36 V46 A14 13 0 1 1 24 32 H42 A6 6 0 1 0 38 24 V26" stroke="#5fd5d3" />
      </g>
    </>) },
  { name: "FileZilla", art: (
    <>
      <defs><G id="fz" a="#b5261a" b="#7a150f" /></defs>
      <rect x="-6" y="-6" width="80" height="80" fill="url(#fz)" />
      <rect x="-6.500" y="-6.500" width="81" height="81" stroke="#a11f16" strokeWidth="3" strokeDasharray="5 4" />
      <path d="M13 4 H52 L50 16 H25 L23 27 H64 L63 32 L44 55 H59 L57 62 C48 58 42 66 26 63 L27 58 L47 36 H22 L16 59 H4 Z" fill="#fff" />
    </>) },
  { name: "GitHub Desktop", run: true, art: (
    <>
      <Tile id="gh" a="#8a3fb4" b="#56308c" />
      <FaGithub x="5" y="5" size={58} color="#ece6f2" />
    </>) },
];

function DockItem({ name, run, badge, art }) {
  return (
    <button aria-label={name} className="relative flex flex-col items-center gap-[10px]">
      <Svg w={68} h={68}>{art}</Svg>
      <span className={`size-2 rounded-full ${run ? "bg-[#99a1ad]" : "bg-transparent"}`} />
      {badge && (
        <span className="absolute -top-2 left-[62px] flex h-8 min-w-8 -translate-x-1/2 items-center justify-center rounded-full bg-[#e0503f] px-[2px] text-[18px] leading-none text-white">
          {badge}
        </span>
      )}
    </button>
  );
}

function Dock() {
  return (
    <footer className="flex shrink-0 justify-center bg-linear-to-r from-[#030a18] via-[#020d1c] to-[#04162c] pb-[10px] pt-[6px]">
      <div className="flex gap-5 rounded-[32px] border-2 border-[#3a414b] bg-[#161d28] pb-[2px] pl-[13px] pr-[13px] pt-[14px]">
        {apps.map((a) => (
          <DockItem key={a.name} {...a} />
        ))}
        <span className="ml-[10px] mr-2 -mt-[2px] h-[78px] w-[2px] bg-[#454c57]" />
        <DockItem
          name="Downloads"
          art={
            <>
              <path d="M8 -6 H36 V20 H8Z" fill="#17407c" />
              <path d="M-1 14 a4 4 0 0 1 4 -4 H21 L27 15 H65 a4 4 0 0 1 4 4 V40 H-1Z" fill="#4d9fd3" />
              <rect x="-1" y="19" width="70" height="49" rx="4" fill="#7dcdf9" />
              <path d="M25 -6 H46 L60 14 H27 L25 10Z" fill="#5ea5f6" />
              <path d="M-1 61H69" stroke="#68b9e6" strokeWidth="2" />
            </>
          }
        />
        <DockItem
          name="Trash"
          art={
            <>
              <defs><G id="tr" a="#6b6d70" b="#8f9194" /></defs>
              <path d="M8 3 L15 -3 L22 -1 L28 -6 L36 -2 L42 -5 L50 -3 L60 4 L54 12 H14Z" fill="#dcdcdc" />
              <path d="M5 2 C12 8 56 8 63 2 L56 66 C52 73 16 73 12 66 Z" fill="url(#tr)" fillOpacity=".9" />
              <path d="M10 3 L15 -3 L22 -1 L28 -6 L36 -2 L42 -5 L50 -3 L58 3 L50 10 L34 13 L18 10Z" fill="#dcdcdc" />
              <path d="M18 0 L24 8 M34 -2 L30 10 M44 -2 L40 8 M52 0 L48 8" stroke="#6d6d6d" strokeWidth="2" />
              <path d="M25 2 l6 3 -4 4z" fill="#58b9c4" />
              <path d="M42 1 l5 4 -4 5z" fill="#c0763c" />
              <path d="M16 12 L20 66 M34 14 V68 M52 12 L48 66" stroke="#a9abad" strokeOpacity=".3" strokeWidth="3" />
              <path d="M5 2 C12 12 56 12 63 2" stroke="#b9bbbd" strokeWidth="1.500" />
            </>
          }
        />
      </div>
    </footer>
  );
}

export default function App() {
  return (
    <div className="flex min-h-screen flex-col bg-black font-['Inter','Noto_Sans_CJK_KR',sans-serif]">
      <MenuBar />
      <section className="flex flex-1 flex-col overflow-hidden rounded-[20px] border-x border-y-2 border-t-[#636363] border-x-[#4a4a4a] border-b-[#4d4d4d]">
        <TabStrip />
        <Toolbar />
        <BookmarkBar />
        <Game />
      </section>
      <Dock />
    </div>
  );
}
